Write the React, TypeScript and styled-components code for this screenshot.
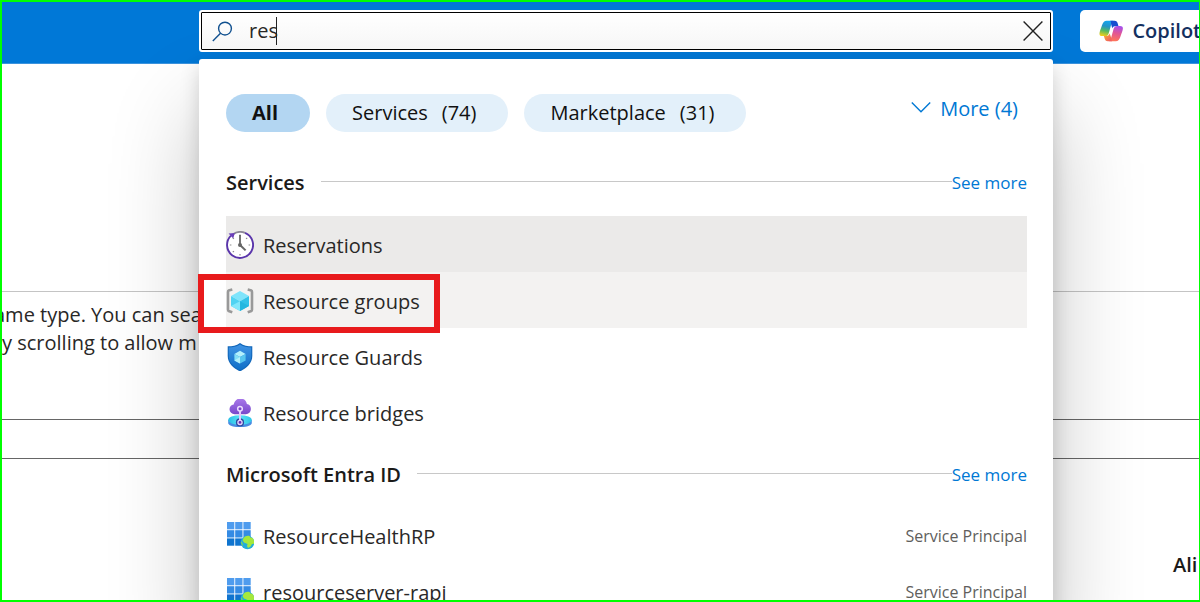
import React, { useState } from "react";
import styled, { createGlobalStyle } from "styled-components";

const GlobalStyle = createGlobalStyle`
  * { box-sizing: border-box; }
  body {
    margin: 0;
    font-family: "Segoe UI", "Open Sans", "Noto Sans", sans-serif;
    font-size: 20px;
    line-height: 28px;
    color: #292827;
  }
  button, input { font: inherit; color: inherit; }
`;

const Frame = styled.div`
  display: flex;
  flex-direction: column;
  height: 100vh;
  overflow: hidden;
  background: #fff;
  border: 2px solid #00ff00;
  border-right-width: 1px;
`;

const Header = styled.header`
  flex: none;
  display: grid;
  grid-template-columns: 197px minmax(0, 1fr) 119px;
  padding: 8px 0 11px;
  background: #0078d7;
  border-bottom: 1px solid #3b93dd;
`;

const SearchArea = styled.div`
  grid-column: 2;
  position: relative;
  z-index: 1;
  margin-right: 27px;
`;

const SearchBox = styled.label`
  position: relative;
  z-index: 1;
  display: flex;
  align-items: center;
  height: 42px;
  padding: 0 8px 0 11px;
  border: 2px solid #fff;
  border-radius: 3px;
  outline: 1px solid #000;
  outline-offset: -3px;
  background: linear-gradient(#fff, #f6f6f6);
`;

const SearchInput = styled.input`
  field-sizing: content;
  margin-left: 16px;
  padding: 0;
  border: 0;
  outline: 0;
  background: none;
  caret-color: transparent;
`;

const Caret = styled.span`
  width: 1px;
  height: 28px;
  margin-left: -2px;
  background: #222;
`;

const ClearButton = styled.button`
  display: flex;
  margin-left: auto;
  padding: 0;
  border: 0;
  background: none;
`;

const CopilotButton = styled.button`
  display: flex;
  align-items: center;
  gap: 9px;
  width: 140px;
  height: 42px;
  padding: 0 19px;
  border: 0;
  border-radius: 5px;
  background: #fff;
  color: #14305f;
  font-weight: 600;
`;

const Panel = styled.section`
  position: absolute;
  top: 49px;
  left: 0;
  right: 0;
  padding: 35px 26px 0 27px;
  border-radius: 3px;
  background: #fff;
  box-shadow: 0 54px 90px rgba(0, 0, 0, 0.24), 0 9px 20px rgba(0, 0, 0, 0.16);
`;

const Filters = styled.div`
  display: flex;
  gap: 16px;
  margin-bottom: 16px;
`;

const Pill = styled.button<{ $active?: boolean }>`
  display: flex;
  align-items: center;
  gap: 14px;
  height: 38px;
  padding: 0 32px 0 26px;
  border: 0;
  border-radius: 19px;
  color: #111;
  background: ${(p) => (p.$active ? "#b3d6f2" : "#e3f0fa")};
  font-weight: ${(p) => (p.$active ? 700 : 400)};
`;

const MoreButton = styled.button`
  display: flex;
  align-items: center;
  gap: 9px;
  height: 30px;
  margin-left: auto;
  padding: 0 9px 0 0;
  border: 0;
  background: none;
  color: #0078d4;
`;

const GroupHeader = styled.div`
  display: flex;
  align-items: center;
  height: 68px;
  padding-top: 2px;
`;

const GroupTitle = styled.h2`
  margin: 0 16px 0 0;
  font-size: 20px;
  font-weight: 600;
  color: #1b1a19;
`;

const Rule = styled.span`
  flex: 1;
  height: 1px;
  margin-bottom: 4px;
  background: #c8c8c8;
`;

const SeeMore = styled.a`
  font-size: 17px;
  color: #0078d4;
  text-decoration: none;
`;

const Results = styled.ul`
  margin: 0;
  padding: 0;
  list-style: none;
`;

const Row = styled.li<{ $shade?: string; $compact: boolean }>`
  position: relative;
  display: flex;
  align-items: center;
  gap: 9px;
  height: 56px;
  padding-top: ${(p) => (p.$compact ? 0 : 2)}px;
  background: ${(p) => p.$shade ?? "none"};

  svg { flex: none; }
`;

const RowLink = styled.a`
  flex: 1;
  padding-top: 2px;
  color: inherit;
  text-decoration: none;
`;

const RowKind = styled.span`
  font-size: 16px;
  color: #605e5c;
`;

const Highlight = styled.div`
  position: absolute;
  top: 2px;
  left: -28px;
  width: 242px;
  height: 59px;
  border: 6px solid #e81a1c;
  z-index: 1;
  pointer-events: none;
`;

const Page = styled.main`
  flex: 1;
  min-height: 0;
  display: flex;
  flex-direction: column;
  white-space: nowrap;
`;

const Band = styled.div<{ $height: number; $line: string }>`
  flex: none;
  height: ${(p) => p.$height}px;
  border-bottom: 1px solid ${(p) => p.$line};
  overflow: hidden;
`;

const Intro = styled.p<{ $cut?: boolean }>`
  margin: 0 0 0 ${(p) => (p.$cut ? "-8px" : "0")};

  &:first-child { margin-top: 9px; }
`;

const ColumnLabel = styled.div`
  align-self: flex-end;
  width: 26px;
  margin-top: 92px;
  font-weight: 600;
  color: #1b1a19;
`;

function SearchIcon() {
  return (
    <svg width="21" height="21" viewBox="0 0 21 21" fill="none" stroke="#10508f" strokeWidth="1.4" aria-hidden="true">
      <circle cx="13" cy="7.6" r="6.4" />
      <path d="M8.5 12.2 0.8 20" />
    </svg>
  );
}

function CloseIcon() {
  return (
    <svg width="20" height="20" viewBox="0 0 20 20" fill="none" stroke="#222" strokeWidth="1.4" aria-hidden="true">
      <path d="M.6.6l18.8 18.8M19.4.6.6 19.4" />
    </svg>
  );
}

function ChevronIcon() {
  return (
    <svg width="20" height="20" viewBox="0 0 20 20" fill="none" stroke="#0078d4" strokeWidth="1.4" aria-hidden="true">
      <path d="M.8 3.500 10 12.700l9.200-9.200" />
    </svg>
  );
}

function CopilotIcon() {
  return (
    <svg width="26" height="24" viewBox="0 0 26 24" aria-hidden="true">
      <defs>
        <linearGradient id="cpLeft" x1=".5" y1="0" x2=".3" y2="1">
          <stop offset="0" stopColor="#14a5ee" />
          <stop offset=".35" stopColor="#2394c8" />
          <stop offset=".65" stopColor="#55ba62" />
          <stop offset="1" stopColor="#f3cf18" />
        </linearGradient>
        <linearGradient id="cpRight" x1=".6" y1="0" x2=".4" y2="1">
          <stop offset="0" stopColor="#a550ed" />
          <stop offset=".45" stopColor="#e05597" />
          <stop offset="1" stopColor="#ff7657" />
        </linearGradient>
        <linearGradient id="cpBottom" x1="0" y1="0" x2="1" y2="1">
          <stop offset="0" stopColor="#f9b22d" />
          <stop offset="1" stopColor="#f0506a" />
        </linearGradient>
      </defs>
      <path d="M15.5 1H8.2C5.5 1 4.1 3 3.2 5.800 2 9.500.5 12.600.5 14.800c0 1.900 1.300 2.600 3 2.600h3.200c2 0 3.100-1.100 3.700-3.100L13 5.200C13.700 2.900 14.200 1.600 15.500 1z" fill="url(#cpLeft)" />
      <path d="M10.500 23h7.300c2.700 0 4.100-2 5-4.800 1.200-3.700 2.700-6.800 2.700-9 0-1.900-1.300-2.600-3-2.600h-3.200c-2 0-3.100 1.100-3.700 3.100L13 18.800c-.7 2.300-1.200 3.600-2.500 4.200z" fill="url(#cpRight)" />
      <path d="M12 1h4.600c2 0 2.800 1.200 3.300 2.800l.8 2.800h-2.200c-2.500 0-3.600.8-4.400 2.600L13 5.200C12.700 3.200 13 1.800 12 1z" fill="#154ed0" />
      <path d="M14 23H9.500c-2.200 0-3-1.300-3.500-3l-.8-2.600h2c2.200 0 3.600-1.100 4.200-2.800l1.500 4.400c.3 1.600.1 3 1.100 4z" fill="url(#cpBottom)" />
    </svg>
  );
}

function ClockIcon() {
  return (
    <svg width="28" height="28" viewBox="0 0 28 28" aria-hidden="true">
      <circle cx="14" cy="14" r="13" fill="#fff" />
      <path d="M5 4.600A13 13 0 1 0 19 1.900" fill="none" stroke="#5a35ab" strokeWidth="1.900" />
      <path d="M7 3.200A13 13 0 0 1 19 1.900" fill="none" stroke="#8c8896" strokeWidth="1.900" />
      <path d="M2.600 2.400 8.800 2 7.200 7.600z" fill="#6a3fb8" />
      <path d="M14 3.500v1.600M14 22.900v1.600M3.800 14h1.600M22.600 14h1.600M6.800 6.800l1.100 1.100M20.100 7.900l1.100-1.100M6.800 21.200l1.100-1.100" stroke="#8b8b8b" strokeWidth="1.200" />
      <path d="M14 4v10" stroke="#666" strokeWidth="1.800" fill="none" />
      <path d="m14 14 5.600 5.400" stroke="#666" strokeWidth="2" fill="none" />
      <circle cx="14" cy="14" r="2" fill="#666" />
    </svg>
  );
}

function ResourceGroupIcon() {
  return (
    <svg width="28" height="28" viewBox="0 0 28 28" aria-hidden="true">
      <path d="M6.300 2.600 2.600 3.600Q2 3.800 2 5v17.500q0 1.200.6 1.400l3.700 1.300M21.700 2.600l3.700 1Q26 3.800 26 5v17.500q0 1.200-.6 1.400l-3.700 1.300" fill="none" stroke="#999" strokeWidth="2.600" />
      <path d="m14 4 9 5-9 5.200L5 9z" fill="#7fe4fb" />
      <path d="M5 9l9 5.200V24l-9-5z" fill="#50d3f2" />
      <path d="M23 9l-9 5.200V24l9-5z" fill="#32c2e8" />
      <path d="M5 19l9-4.800V24z" fill="#83e7fb" />
      <path d="m14 14.200 9 4.800-9 5z" fill="#25b7df" />
    </svg>
  );
}

function GuardIcon() {
  return (
    <svg width="28" height="28" viewBox="0 0 28 28" aria-hidden="true">
      <defs>
        <linearGradient id="shield" x1="0" y1="0" x2="0" y2="1">
          <stop offset="0" stopColor="#4093e4" />
          <stop offset="1" stopColor="#0f6fc7" />
        </linearGradient>
      </defs>
      <path d="M14 0c3.700 2.800 7.500 3.200 12.300 3.300V13c0 8-6.700 12.500-12.300 15.500C8.400 25.500 1.700 21 1.700 13V3.300C6.500 3.200 10.300 2.800 14 0z" fill="#1267ba" />
      <path d="M14 1.500c3.400 2.400 6.800 2.900 11.200 3V13c0 7-5.900 11.300-11.200 14.100C8.700 24.300 2.800 20 2.800 13V4.500c4.400-.1 7.800-.6 11.200-3z" fill="url(#shield)" />
      <path d="m14 7.800 5.600 3.100-5.600 3.200-5.600-3.200z" fill="#b4f0fc" />
      <path d="M8.400 10.900 14 14.100v6.500l-5.600-3.200z" fill="#83def7" />
      <path d="M19.600 10.900 14 14.100v6.500l5.600-3.200z" fill="#58c6ef" />
      <path d="m8.400 17.400 5.600-3.300v6.500z" fill="#b4f0fc" />
    </svg>
  );
}

function BridgeIcon() {
  return (
    <svg width="28" height="28" viewBox="0 0 28 28" aria-hidden="true">
      <defs>
        <linearGradient id="cloud" x1="0" y1="0" x2="0" y2="1">
          <stop offset="0" stopColor="#a978ea" />
          <stop offset="1" stopColor="#7848cb" />
        </linearGradient>
        <linearGradient id="disc" x1="0" y1="0" x2="1" y2="0">
          <stop offset="0" stopColor="#27bfe5" />
          <stop offset=".5" stopColor="#5be2f7" />
          <stop offset="1" stopColor="#2cc5e9" />
        </linearGradient>
      </defs>
      <path d="M2.200 21v3c0 2.400 5.200 4.200 11.800 4.200S25.800 26.400 25.800 24v-3z" fill="#4a8ce2" />
      <ellipse cx="14" cy="21" rx="11.800" ry="4.800" fill="url(#disc)" />
      <path d="M8.600 15.200A5.100 5.100 0 0 1 3.500 10.300c0-2.500 1.700-4.200 4.200-4.700C8.400 2.300 10.800-.6 14.200-.6c3.800 0 6.200 2.500 6.700 5.700 2.400.3 4 2.300 4 4.900a5.100 5.100 0 0 1-5.200 5.200z" fill="url(#cloud)" />
      <circle cx="14" cy="23.400" r="4.100" fill="#2d4aa1" />
      <path d="M14 10v13" stroke="#e2cafc" strokeWidth="2" />
      <circle cx="14" cy="9.800" r="2.300" fill="#7a46ca" stroke="#edddff" strokeWidth="1.500" />
      <circle cx="14" cy="23.400" r="2.100" fill="#6731b7" stroke="#e6d9ff" strokeWidth="1.300" />
    </svg>
  );
}

function AppGridIcon() {
  const shades = ["#4f9cee", "#348be4", "#0f74cf"];
  return (
    <svg width="28" height="28" viewBox="0 0 28 28" aria-hidden="true">
      {shades.map((shade, r) =>
        [0, 1, 2].map((c) => (
          <rect key={`${r}-${c}`} x={1 + c * 8.2} y={r * 8.2} width="7.3" height="7.3" fill={shade} />
        )),
      )}
      <circle cx="21.500" cy="20.500" r="6.800" fill="#23add9" />
      <path d="M17.500 16c1.500-1.900 4-2.700 6-2l1 1.500 2.100.4c1.400 1.800 1.900 3.800 1.400 5.800l-2 .4-1.400 2.400-2.600 1.400-1-1.900.6-2.100-3.600-1.500-1.400-2z" fill="#a5e83c" />
      <path d="M15 19l1.600 2.200.4 2.900c-1.800-1.500-2.400-3.200-2-5.100z" fill="#7bd35b" />
    </svg>
  );
}

type Item = {
  name: string;
  Icon: () => React.JSX.Element;
  shade?: string;
  kind?: string;
  highlighted?: boolean;
};

const groups: { title: string; items: Item[] }[] = [
  {
    title: "Services",
    items: [
      { name: "Reservations", Icon: ClockIcon, shade: "#ebeae9" },
      { name: "Resource groups", Icon: ResourceGroupIcon, shade: "#f3f2f1", highlighted: true },
      { name: "Resource Guards", Icon: GuardIcon },
      { name: "Resource bridges", Icon: BridgeIcon },
    ],
  },
  {
    title: "Microsoft Entra ID",
    items: [
      { name: "ResourceHealthRP", Icon: AppGridIcon, kind: "Service Principal" },
      { name: "resourceserver-rapi", Icon: AppGridIcon, kind: "Service Principal" },
    ],
  },
];

export default function App() {
  const [query, setQuery] = useState("res");

  return (
    <>
      <GlobalStyle />
      <Frame>
        <Header>
          <SearchArea>
            <SearchBox>
              <SearchIcon />
              <SearchInput
                type="text"
                aria-label="Search"
                value={query}
                onChange={(e) => setQuery(e.target.value)}
              />
              <Caret />
              <ClearButton type="button" aria-label="Clear search" onClick={() => setQuery("")}>
                <CloseIcon />
              </ClearButton>
            </SearchBox>
            <Panel>
              <Filters>
                <Pill type="button" $active>All</Pill>
                <Pill type="button"><span>Services</span><span>(74)</span></Pill>
                <Pill type="button"><span>Marketplace</span><span>(31)</span></Pill>
                <MoreButton type="button"><ChevronIcon />More (4)</MoreButton>
              </Filters>
              {groups.map((group) => (
                <React.Fragment key={group.title}>
                  <GroupHeader>
                    <GroupTitle>{group.title}</GroupTitle>
                    <Rule />
                    <SeeMore href="#">See more</SeeMore>
                  </GroupHeader>
                  <Results>
                    {group.items.map(({ name, Icon, shade, kind, highlighted }) => (
                      <Row key={name} $shade={shade} $compact={Boolean(kind)}>
                        <Icon />
                        <RowLink href="#">{name}</RowLink>
                        {kind && <RowKind>{kind}</RowKind>}
                        {highlighted && <Highlight />}
                      </Row>
                    ))}
                  </Results>
                </React.Fragment>
              ))}
            </Panel>
          </SearchArea>
          <CopilotButton type="button"><CopilotIcon />Copilot</CopilotButton>
        </Header>
        <Page>
          <Band $height={228} $line="#c4c4c4" />
          <Band $height={128} $line="#666">
            <Intro $cut>ame type. You can sea</Intro>
            <Intro>y scrolling to allow m</Intro>
          </Band>
          <Band $height={39} $line="#666" />
          <ColumnLabel>Ali</ColumnLabel>
        </Page>
      </Frame>
    </>
  );
}
